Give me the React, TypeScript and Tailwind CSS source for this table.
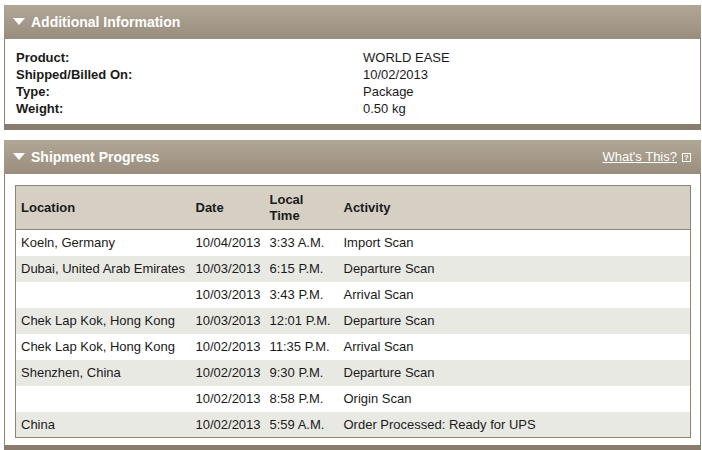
import React from 'react';

const info = [
  { label: 'Product:', value: 'WORLD EASE' },
  { label: 'Shipped/Billed On:', value: '10/02/2013' },
  { label: 'Type:', value: 'Package' },
  { label: 'Weight:', value: '0.50 kg' },
];

const rows = [
  { loc: 'Koeln, Germany', date: '10/04/2013', time: '3:33 A.M.', act: 'Import Scan' },
  { loc: 'Dubai, United Arab Emirates', date: '10/03/2013', time: '6:15 P.M.', act: 'Departure Scan' },
  { loc: '', date: '10/03/2013', time: '3:43 P.M.', act: 'Arrival Scan' },
  { loc: 'Chek Lap Kok, Hong Kong', date: '10/03/2013', time: '12:01 P.M.', act: 'Departure Scan' },
  { loc: 'Chek Lap Kok, Hong Kong', date: '10/02/2013', time: '11:35 P.M.', act: 'Arrival Scan' },
  { loc: 'Shenzhen, China', date: '10/02/2013', time: '9:30 P.M.', act: 'Departure Scan' },
  { loc: '', date: '10/02/2013', time: '8:58 P.M.', act: 'Origin Scan' },
  { loc: 'China', date: '10/02/2013', time: '5:59 A.M.', act: 'Order Processed: Ready for UPS' },
];

function PanelHeader({ title, children }: { title: string; children?: React.ReactNode }) {
  return (
    <div className="flex h-[34px] items-center justify-between bg-gradient-to-b from-[#b1a797] to-[#998e7d] pl-[9px] pr-[10px]">
      <div className="flex items-center">
        <svg width="12" height="8" viewBox="0 0 12 8" className="mr-[6px]">
          <path d="M0 0 H12 L6 7 Z" fill="#fff" />
        </svg>
        <span className="text-[14px] font-bold text-white">{title}</span>
      </div>
      {children}
    </div>
  );
}

export default function App() {
  return (
    <div className="h-[450px] w-[702px] overflow-hidden bg-white pl-[4px] pr-[1px] pt-[5px] font-['Liberation_Sans',Arial,sans-serif] text-[13px] text-[#1a1a1a]">
      <div>
        <PanelHeader title="Additional Information" />
        <div className="border-x border-[#8e8474] pb-[7px] pl-[11px] pt-[10px]">
          {info.map((r) => (
            <div key={r.label} className="flex h-[17px] items-center">
              <span className="w-[347px] font-bold">{r.label}</span>
              <span>{r.value}</span>
            </div>
          ))}
        </div>
        <div className="h-[6px] bg-[#877c6d]" />
      </div>

      <div className="mt-[10px]">
        <PanelHeader title="Shipment Progress">
          <div className="flex items-center gap-[5px]">
            <a className="text-[13px] text-white underline">What's This?</a>
            <span className="flex h-[9px] w-[9px] items-center justify-center border border-white text-[7px] font-bold leading-none text-white">?</span>
          </div>
        </PanelHeader>
        <div className="border-x border-[#8e8474] pb-[7px] pl-[10px] pr-[9px] pt-[11px]">
          <table className="w-full border-collapse border border-[#8e8474]">
            <thead>
              <tr className="h-[44px] bg-[#d6d0c4] text-left">
                <th className="w-[180px] pl-[5px] font-bold">Location</th>
                <th className="w-[74px] font-bold">Date</th>
                <th className="w-[74px] font-bold leading-[16px]">Local<br />Time</th>
                <th className="font-bold">Activity</th>
              </tr>
            </thead>
            <tbody>
              {rows.map((r, i) => (
                <tr key={i} className={`h-[26px] ${i % 2 === 1 ? 'bg-[#e9e9e4]' : 'bg-white'} ${i === 0 ? 'border-t border-[#8e8474]' : ''}`}>
                  <td className="pl-[5px]">{r.loc}</td>
                  <td>{r.date}</td>
                  <td>{r.time}</td>
                  <td>{r.act}</td>
                </tr>
              ))}
            </tbody>
          </table>
        </div>
        <div className="h-[6px] bg-[#877c6d]" />
      </div>
    </div>
  );
}
